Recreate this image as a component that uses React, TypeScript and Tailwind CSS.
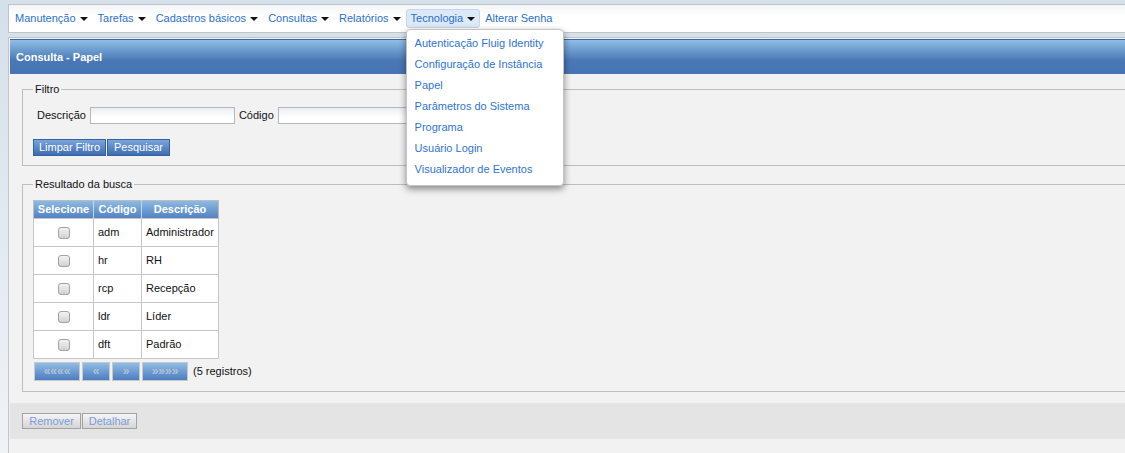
import React from 'react'

const NAV = ['Manutenção', 'Tarefas', 'Cadastros básicos', 'Consultas', 'Relatórios']
const TECH_ITEMS = [
  'Autenticação Fluig Identity',
  'Configuração de Instância',
  'Papel',
  'Parâmetros do Sistema',
  'Programa',
  'Usuário Login',
  'Visualizador de Eventos',
]
const ROWS = [
  { code: 'adm', desc: 'Administrador' },
  { code: 'hr', desc: 'RH' },
  { code: 'rcp', desc: 'Recepção' },
  { code: 'ldr', desc: 'Líder' },
  { code: 'dft', desc: 'Padrão' },
]

function Caret() {
  return <span className="inline-block h-0 w-0 border-x-[4px] border-t-[4px] border-x-transparent border-t-[#111]" />
}

function TextInput() {
  return <div className="h-[17px] w-[145px] border border-[#b7b7b7] bg-gradient-to-b from-[#e8edf5] to-white to-60%" />
}

function BlueButton({ label, w }: { label: string; w: string }) {
  return (
    <button className={`${w} h-[17px] border border-[#34629f] bg-gradient-to-b from-[#7aa5dc] to-[#3e6cb0] leading-[15px] text-white`}>
      {label}
    </button>
  )
}

function PagerButton({ label, w }: { label: string; w: string }) {
  return (
    <div className={`${w} flex h-[19px] items-center justify-center border border-[#c9c9c9] bg-gradient-to-b from-[#8fbde6] to-[#4d7dbf] text-[12px] font-bold text-[#b4c0d2]`}>
      {label}
    </div>
  )
}

function GrayButton({ label, w }: { label: string; w: string }) {
  return (
    <button className={`${w} h-[16px] border border-[#a3a3a3] bg-gradient-to-b from-[#f5f5f5] to-[#d5d5d5] leading-[14px] text-[#7a9cda]`}>
      {label}
    </button>
  )
}

export default function App() {
  return (
    <div className="relative h-[453px] w-[1125px] overflow-hidden bg-gradient-to-b from-[#d4e0ea] to-[#eff3f8] font-['Liberation_Sans',Arial,sans-serif] text-[11px] leading-[13px] text-[#111]">
      {/* menu */}
      <div className="pl-2 pt-1">
        <div className="flex h-[29px] w-[1140px] items-center border border-[#c3c3c3] bg-gradient-to-b from-[#f1f4f8] to-white to-40% pl-[1px]">
          {NAV.map(n => (
            <div key={n} className="flex h-[19px] items-center gap-[4px] border border-transparent px-[4px] text-[#2b6fca]">
              <span>{n}</span>
              <Caret />
            </div>
          ))}
          <div className="relative flex h-[19px] items-center gap-[4px] rounded-[3px] border border-[#c6d6e8] bg-[#dce9f6] px-[4px] text-[#2b6fca]">
            <span>Tecnologia</span>
            <Caret />
            <ul className="absolute left-[-1px] top-[19px] z-10 w-[158px] rounded-[4px] border border-[#c4c4c4] bg-white pb-[5px] pt-[3px] shadow-[0_3px_7px_rgba(0,0,0,0.45)]">
              {TECH_ITEMS.map(t => (
                <li key={t} className="h-[21px] pl-[8px] leading-[21px] text-[#2f74d0]">{t}</li>
              ))}
            </ul>
          </div>
          <div className="flex h-[19px] items-center px-[5px] text-[#2b6fca]">Alterar Senha</div>
        </div>
      </div>

      {/* panel */}
      <div className="ml-2 mt-1 h-[500px] w-[1140px] border border-[#c4c4c4] bg-[#f2f2f2] p-px">
        <div className="flex h-[35px] items-center border-t border-[#3b66a6] bg-gradient-to-b from-[#8fbfe6] via-[#4a78b6] via-60% to-[#4674b4] pl-[6px] font-bold text-white">
          Consulta - Papel
        </div>

        <fieldset className="mx-3 mt-[9px] border border-[#bdbdbd] pb-[9px] pl-[10px] pt-[11px]">
          <legend className="px-[2px]">Filtro</legend>
          <div className="flex items-center">
            <span className="ml-[4px] mr-[4px]">Descrição</span>
            <TextInput />
            <span className="ml-[4px] mr-[4px]">Código</span>
            <TextInput />
          </div>
          <div className="mt-[15px] flex gap-px">
            <BlueButton label="Limpar Filtro" w="w-[73px]" />
            <BlueButton label="Pesquisar" w="w-[63px]" />
          </div>
        </fieldset>

        <fieldset className="mx-3 mt-[12px] border border-[#bdbdbd] pb-[10px] pl-[10px] pt-[9px]">
          <legend className="px-[2px]">Resultado da busca</legend>
          <table className="border-collapse border border-[#bcbcbc] bg-white">
            <thead>
              <tr className="h-[18px] bg-gradient-to-b from-[#8dbae3] to-[#4f7fc0] font-bold text-white">
                <th className="w-[60px] border-r border-[#c3d5ea] px-0 text-center">Selecione</th>
                <th className="w-[48px] border-r border-[#c3d5ea] text-center">Código</th>
                <th className="w-[77px] text-center">Descrição</th>
              </tr>
            </thead>
            <tbody>
              {ROWS.map(r => (
                <tr key={r.code} className="h-[28px]">
                  <td className="border border-[#c6c6c6]">
                    <div className="mx-auto h-[12px] w-[12px] rounded-[3px] border border-[#a2a2a2] bg-gradient-to-b from-[#f3f3f3] to-[#d2d2d2]" />
                  </td>
                  <td className="border border-[#c6c6c6] pl-[4px]">{r.code}</td>
                  <td className="border border-[#c6c6c6] pl-[4px]">{r.desc}</td>
                </tr>
              ))}
            </tbody>
          </table>
          <div className="mt-[3px] flex items-center gap-[2px] pl-px">
            <PagerButton label="««««" w="w-[46px]" />
            <PagerButton label="«" w="w-[28px]" />
            <PagerButton label="»" w="w-[28px]" />
            <PagerButton label="»»»»" w="w-[46px]" />
            <span className="ml-[3px]">(5 registros)</span>
          </div>
        </fieldset>

        <div className="mt-[11px] flex h-[36px] items-center gap-px bg-[#e4e4e4] pl-3">
          <GrayButton label="Remover" w="w-[59px]" />
          <GrayButton label="Detalhar" w="w-[55px]" />
        </div>
      </div>
    </div>
  )
}
